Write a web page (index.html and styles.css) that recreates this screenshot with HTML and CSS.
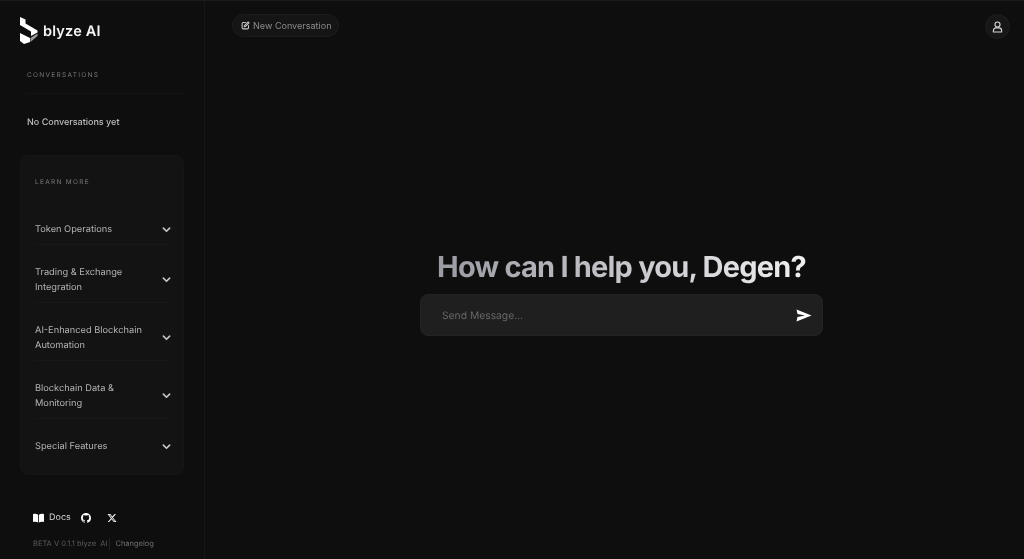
FILE: index.html
```html
<!DOCTYPE html>
<html lang="en">
<head>
<meta charset="utf-8">
<title>blyze AI</title>
<link rel="stylesheet" href="styles.css">
</head>
<body>
<div class="app">
  <aside class="sidebar">
    <div class="brand">
      <svg class="logo" width="18" height="27" viewBox="0 0 18 27"><path fill="#fff" d="M0 0L5.500 2.500V6.500L17.500 13.500V15.500L11 19V14.500L0 8z"/><path fill="#fff" d="M0 16L10 21V25L4 27L0 24z"/><path fill="#9a9a9a" d="M10.500 21L17.500 16.500V19L10.500 25z"/></svg>
      <span class="brand-name">blyze AI</span>
    </div>
    <div class="section-label conv-label">CONVERSATIONS</div>
    <div class="conv-empty">No Conversations yet</div>
    <section class="card">
      <div class="section-label">LEARN MORE</div>
      <ul class="topics">
        <li class="topic"><span>Token Operations</span><svg class="chev" viewBox="0 0 10 10"><path d="M1.500 3.500L5 7l3.500-3.500"/></svg></li>
        <li class="topic"><span>Trading &amp; Exchange Integration</span><svg class="chev" viewBox="0 0 10 10"><path d="M1.500 3.500L5 7l3.500-3.500"/></svg></li>
        <li class="topic"><span>AI-Enhanced Blockchain Automation</span><svg class="chev" viewBox="0 0 10 10"><path d="M1.500 3.500L5 7l3.500-3.500"/></svg></li>
        <li class="topic"><span>Blockchain Data &amp; Monitoring</span><svg class="chev" viewBox="0 0 10 10"><path d="M1.500 3.500L5 7l3.500-3.500"/></svg></li>
        <li class="topic"><span>Special Features</span><svg class="chev" viewBox="0 0 10 10"><path d="M1.500 3.500L5 7l3.500-3.500"/></svg></li>
      </ul>
    </section>
    <div class="foot">
      <div class="links">
        <span class="doc"><svg width="11" height="10" viewBox="0 0 11 10"><path fill="#fff" d="M0 1.200C1.800.6 3.700.8 5.100 1.800V9.500C3.700 8.700 1.800 8.500 0 9z"/><path fill="#fff" d="M11 1.200C9.200.6 7.300.8 5.900 1.800V9.500C7.300 8.700 9.200 8.500 11 9z"/></svg>Docs</span>
        <svg class="gh" width="10" height="10" viewBox="0 0 16 16"><path fill="#fff" d="M8 0C3.580 0 0 3.580 0 8c0 3.540 2.290 6.530 5.470 7.590.4.070.55-.17.55-.38 0-.19-.010-.82-.010-1.490-2.010.37-2.530-.49-2.690-.94-.090-.23-.48-.94-.82-1.130-.28-.15-.68-.52-.010-.53.63-.010 1.080.58 1.230.82.720 1.210 1.870.87 2.330.66.070-.52.280-.87.510-1.070-1.780-.2-3.640-.89-3.640-3.950 0-.87.310-1.590.82-2.150-.080-.2-.36-1.020.080-2.120 0 0 .67-.21 2.200.82.640-.18 1.320-.27 2-.27s1.360.090 2 .27c1.530-1.040 2.200-.82 2.200-.82.440 1.100.16 1.920.080 2.120.51.560.82 1.270.82 2.150 0 3.070-1.870 3.750-3.650 3.950.29.250.54.730.54 1.480 0 1.070-.010 1.930-.010 2.200 0 .21.150.46.550.38A8.010 8.010 0 0 0 16 8c0-4.420-3.580-8-8-8z"/></svg>
        <svg class="x" width="10" height="10" viewBox="0 0 24 24"><path fill="#fff" d="M18.240 2.250h3.310l-7.230 8.260 8.500 11.240H16.170l-5.210-6.820L5 21.750H1.680l7.730-8.840L1.250 2.250H8.080l4.710 6.230zm-1.160 17.520h1.830L7.080 4.130H5.120z"/></svg>
      </div>
      <div class="meta"><span class="beta">BETA V 0.1.1 blyze&nbsp; AI</span><span class="change">Changelog</span></div>
    </div>
  </aside>
  <main class="main">
    <header class="topbar">
      <button class="new-btn"><svg width="9" height="9" viewBox="0 0 24 24" fill="none" stroke="#c8c8c8" stroke-width="2.800" stroke-linecap="round" stroke-linejoin="round"><path d="M12 4H6a3 3 0 0 0-3 3v11a3 3 0 0 0 3 3h11a3 3 0 0 0 3-3v-6"/><path d="M19 2.500l2.500 2.500L12 14.500l-3.500 1 1-3.500z"/></svg>New Conversation</button>
      <button class="user-btn"><svg width="11" height="12" viewBox="0 0 24 26" fill="none" stroke="#d8d8d8" stroke-width="2.400" stroke-linejoin="round"><circle cx="12" cy="7.500" r="5.500"/><path d="M3 24v-3a6 6 0 0 1 6-6h6a6 6 0 0 1 6 6v3z"/></svg></button>
    </header>
    <div class="center">
      <h1 class="headline">How can I help you, Degen?</h1>
      <div class="composer">
        <span class="placeholder">Send Message...</span>
        <svg width="16" height="13" viewBox="0 0 16 13"><path fill="#fff" d="M0.500 0.500L15.500 6.500L0.500 12.500L1.500 8L9 6.500L1.500 5z"/></svg>
      </div>
    </div>
  </main>
</div>
</body>
</html>
```
FILE: styles.css
```css
* { box-sizing: border-box; }
html, body { margin: 0; height: 100%; background: #0e0e0e; }
body { font-family: Inter, "Liberation Sans", sans-serif; color: #bdbdbd; overflow: hidden; text-rendering: geometricPrecision; }
ul { list-style: none; margin: 0; padding: 0; }
.app { display: flex; height: 559px; border-top: 1px solid #191b1d; will-change: transform; }
.sidebar { width: 205px; flex: none; border-right: 1px solid #171717; display: flex; flex-direction: column; padding: 16px 20px 0; }
.brand { display: flex; align-items: center; gap: 5px; height: 27px; }
.logo { flex: none; }
.brand-name { font-size: 14.500px; font-weight: 600; color: #f4f4f4; letter-spacing: .2px; margin-top: 1px; }
.section-label { font-size: 6.500px; letter-spacing: 1.300px; color: #7a7a7a; line-height: 8px; }
.conv-label { margin: 27px 0 0 7px; padding-bottom: 14px; border-bottom: 1px solid #151515; width: 157px; }
.conv-empty { margin: 22.500px 0 0 7px; font-size: 9px; line-height: 12px; color: #bebebe; font-weight: 500; }
.card { margin-top: 26.500px; width: 164px; height: 320px; background: #131313; border: 1px solid #161616; border-radius: 8px; padding: 22px 14px 0; }
.topics { margin-top: 15.500px; }
.topic { display: flex; align-items: center; justify-content: space-between; gap: 6px; font-size: 9.250px; line-height: 15px; padding: 20px 0 7px; border-bottom: 1px solid #181818; color: #b4b4b4; }
.topic:last-child { border-bottom: 0; }
.topic span { max-width: 116px; }
.chev { width: 9px; height: 9px; flex: none; fill: none; stroke: #c8c8c8; stroke-width: 1.800; stroke-linecap: round; stroke-linejoin: round; margin-right: -2px; }
.foot { margin-top: 36.500px; padding-left: 13px; }
.links { display: flex; align-items: center; height: 12px; font-size: 9px; color: #d4d4d4; }
.doc { display: flex; align-items: center; gap: 5px; }
.gh { margin-left: 10px; }
.x { margin-left: 16px; }
.meta { display: flex; align-items: center; margin-top: 14.500px; font-size: 7.500px; line-height: 12px; color: #5c5c5c; }
.change { margin-left: 2px; padding-left: 5px; border-left: 1px solid #222; color: #6e6e6e; }
.main { flex: 1; display: flex; flex-direction: column; min-width: 0; }
.topbar { display: flex; align-items: flex-start; justify-content: space-between; padding: 13px 14px 0 27px; }
.new-btn { display: flex; align-items: center; gap: 3px; height: 23px; padding: 0 7px 1px 8px; background: #151515; border: 1px solid #1d1d1d; border-radius: 12px; color: #8b8b8b; font: 400 9.050px Inter, "Liberation Sans", sans-serif; }
.user-btn { width: 25px; height: 25px; display: flex; align-items: center; justify-content: center; padding: 0; background: #171717; border: 1px solid #1f1f1f; border-radius: 50%; }
.center { display: flex; flex-direction: column; align-items: center; margin-top: 209.500px; padding-left: 14px; }
.headline { margin: 0; font-size: 29px; line-height: 36px; font-weight: 650; letter-spacing: -.8px; background: linear-gradient(90deg, #9a9aa2, #f0f0f2); -webkit-background-clip: text; background-clip: text; color: transparent; }
.composer { margin-top: 9.500px; width: 403px; height: 42px; display: flex; align-items: center; justify-content: space-between; padding: 0 10px 0 21px; background: #1f1f1f; border: 1px solid #232323; border-radius: 8px; }
.placeholder { font-size: 10.300px; color: #666; margin-top: 2px; }
```
